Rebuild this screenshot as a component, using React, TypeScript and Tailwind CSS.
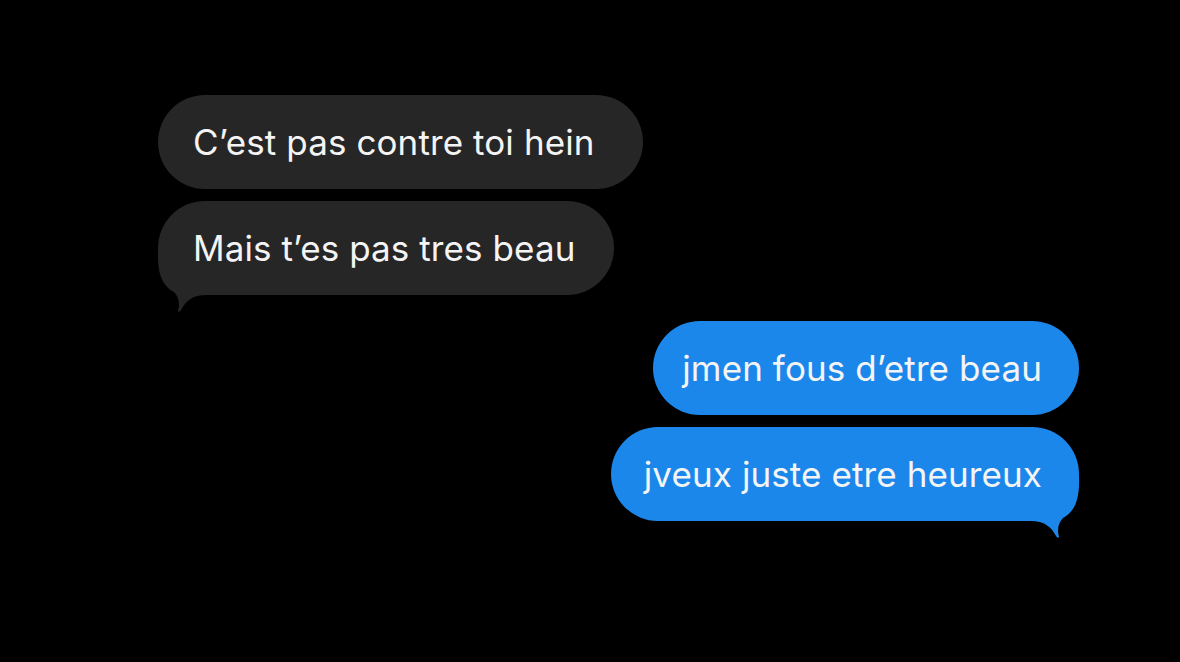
import React from 'react';

type Side = 'left' | 'right';

// hooked iMessage-style tail, drawn for the left side and mirrored for the right
const Tail: React.FC<{ side: Side; color: string }> = ({ side, color }) => (
  <svg
    width="60"
    height="63"
    viewBox="0 0 60 63"
    className={
      side === 'left'
        ? 'absolute left-[-3px] top-[49px]'
        : 'absolute right-[-3px] top-[49px] -scale-x-100'
    }
  >
    <path
      d="M3 0 C2 25 8 36 19 42 C24 47 25 54 23 61 C23 62 25 62 26 60 C31 51 37 45 52 45 L60 45 L60 0 Z"
      fill={color}
    />
  </svg>
);

const Bubble: React.FC<{ text: string; side: Side; width: string; tail?: boolean }> = ({
  text,
  side,
  width,
  tail,
}) => {
  const color = side === 'left' ? '#262626' : '#1c87ea';
  return (
    <div
      className={`relative h-[94px] rounded-full flex items-center ${width} ${
        side === 'left' ? 'bg-[#262626] pl-[35px]' : 'bg-[#1c87ea] justify-end pr-[37px]'
      }`}
    >
      {tail && <Tail side={side} color={color} />}
      <span className="relative text-[35px] tracking-[0.1px] text-[#f4f4f4] font-['Inter',sans-serif] whitespace-nowrap">
        {text}
      </span>
    </div>
  );
};

export default function App() {
  return (
    <div className="w-[1180px] h-[662px] bg-black overflow-hidden pt-[95px]">
      <div className="flex flex-col items-start gap-3 pl-[158px]">
        <Bubble side="left" width="w-[485px]" text="C’est pas contre toi hein" />
        <Bubble side="left" width="w-[456px]" text="Mais t’es pas tres beau" tail />
      </div>
      <div className="flex flex-col items-end gap-3 pr-[101px] mt-[26px]">
        <Bubble side="right" width="w-[426px]" text="jmen fous d’etre beau" />
        <Bubble side="right" width="w-[468px]" text="jveux juste etre heureux" tail />
      </div>
    </div>
  );
}
